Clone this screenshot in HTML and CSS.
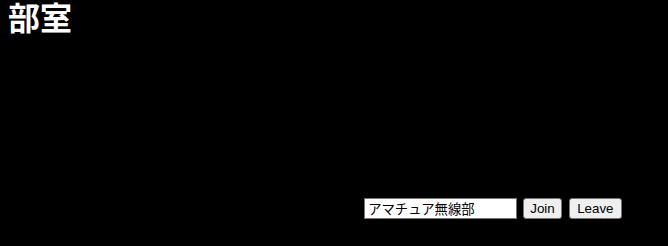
FILE: index.html
```html
<!DOCTYPE html>
<html lang="ja">
<head>
    <meta charset="UTF-8">
    <meta name="viewport" content="width=device-width, initial-scale=1.0">
    <title>部室</title>
    <link rel="stylesheet" href="styles.css">
</head>
<body>
    <div class="room">
        <h1>部室</h1>
        <div class="room-body"></div>
        <form class="room-form" onsubmit="return false;">
            <input type="text" class="room-name" value="アマチュア無線部">
            <button type="button" class="join-button">Join</button>
            <button type="button" class="leave-button">Leave</button>
        </form>
    </div>
</body>
</html>
```

FILE: styles.css
```css
body, html {
    margin: 0;
    padding: 0;
    width: 100%;
    height: 100%;
    background-color: #000;
    font-family: "Liberation Sans", "Noto Sans CJK JP", sans-serif;
}

.room {
    display: flex;
    flex-direction: column;
    height: 100%;
    padding: 0 8px;
    box-sizing: border-box;
}

h1 {
    margin: 0;
    color: #fff;
    font-size: 32px;
    line-height: 32px;
    font-family: "Noto Sans CJK JP", sans-serif;
    font-weight: bold;
}

.room-body {
    flex: 1;
}

.room-form {
    display: flex;
    justify-content: flex-end;
    align-items: center;
    gap: 6px;
    padding: 0 38px 27px 0;
}

.room-name {
    width: 153px;
    height: 21px;
    box-sizing: border-box;
    margin: 0;
    padding: 0 3px;
    border: 1px solid #767676;
    background: #fff;
    font-family: "Noto Sans CJK JP", sans-serif;
    font-size: 13.33px;
    color: #000;
}

.room-form button {
    height: 21px;
    margin: 0;
    padding: 0 6px;
    border: 1px solid #767676;
    border-radius: 3px;
    background-color: #efefef;
    font-family: "Liberation Sans", sans-serif;
    font-size: 13.33px;
    color: #000;
}

.room-form .leave-button {
    margin-left: 1px;
    padding: 0 7.5px;
}
```
